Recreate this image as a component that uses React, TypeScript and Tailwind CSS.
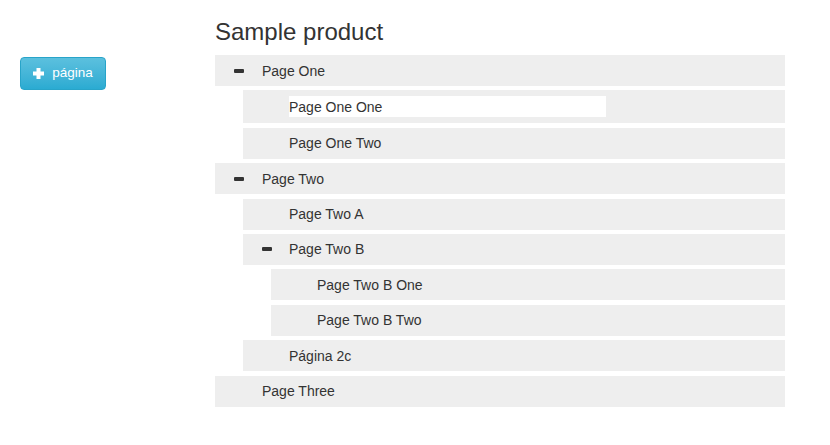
import React from 'react';

type Node = {
  title: string;
  open?: boolean;
  editing?: boolean;
  children?: Node[];
};

const TREE: Node[] = [
  {
    title: 'Page One',
    open: true,
    children: [{ title: 'Page One One', editing: true }, { title: 'Page One Two' }],
  },
  {
    title: 'Page Two',
    open: true,
    children: [
      { title: 'Page Two A' },
      {
        title: 'Page Two B',
        open: true,
        children: [{ title: 'Page Two B One' }, { title: 'Page Two B Two' }],
      },
    ],
  },
];

const Minus = () => <span className="block w-[10px] h-[4px] bg-[#333] rounded-[1px]" />;

const Row: React.FC<{ node: Node; depth?: number }> = ({ node, depth = 0 }) => (
  <div className="flex flex-col gap-[4.4px]">
    <div className="flex items-center bg-[#eeeeee] min-h-[31px] text-[14px] text-[#333]">
      <div className={(depth === 0 ? 'w-[47px]' : 'w-[46px]') + ' shrink-0 pl-[19px] flex items-center'}>
        {node.open && <Minus />}
      </div>
      {node.editing ? (
        <div className="my-[6px] bg-white w-[317px] h-[21px] leading-[23px]">{node.title}</div>
      ) : (
        <div className="leading-[20px]">{node.title}</div>
      )}
    </div>
    {node.children && (
      <div className="pl-[28px] flex flex-col gap-[4.4px]">
        {node.children.map((c, i) => (
          <Row key={i} node={c} depth={depth + 1} />
        ))}
      </div>
    )}
  </div>
);

export default function App() {
  return (
    <div className="w-[830px] h-[445px] bg-white flex" style={{ fontFamily: '"Liberation Sans", Arial, sans-serif' }}>
      <div className="w-[215px] shrink-0 pl-[20px] pt-[57px]">
        <button className="h-[33px] w-[86px] flex items-center justify-center gap-[8px] rounded-[4px] border border-[#28a4c9] bg-gradient-to-b from-[#5bc0de] to-[#2aabd2] text-white text-[13.5px]">
          <svg width="11" height="11" viewBox="0 0 11 11">
            <rect x="3.5" y="0" width="4" height="11" fill="#fff" />
            <rect x="0" y="3.5" width="11" height="4" fill="#fff" />
          </svg>
          <span>página</span>
        </button>
      </div>
      <div className="w-[570px] pt-[19px]">
        <h3 className="text-[24px] leading-[26px] text-[#333] mb-[10px]">Sample product</h3>
        <div className="flex flex-col gap-[4.4px]">
          {TREE.map((n, i) => (
            <Row key={i} node={n} />
          ))}
          <div className="pl-[28px]">
            <Row node={{ title: 'Página 2c' }} depth={1} />
          </div>
          <Row node={{ title: 'Page Three' }} />
        </div>
      </div>
    </div>
  );
}
